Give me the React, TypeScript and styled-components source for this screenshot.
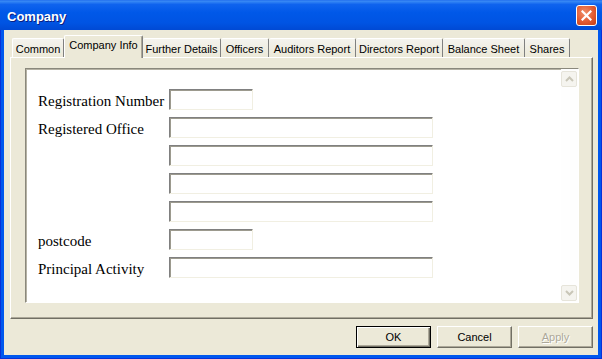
import { Fragment } from 'react';
import styled, { createGlobalStyle } from 'styled-components';

const GlobalStyle = createGlobalStyle`
  html, body {
    margin: 0;
    padding: 0;
    background: #ffffff;
  }
  body {
    font-family: 'Liberation Sans', Arial, sans-serif;
  }
  * {
    box-sizing: border-box;
  }
`;

const Window = styled.div`
  width: 602px;
  height: 359px;
  display: flex;
  flex-direction: column;
  background: #0055e5;
`;

const TitleBar = styled.div`
  height: 30px;
  flex: none;
  display: flex;
  align-items: center;
  justify-content: space-between;
  padding: 0 5px 0 7px;
  background: linear-gradient(
    to bottom,
    #3b8cf5 0%,
    #0f63ee 12%,
    #0058e8 40%,
    #0054e3 75%,
    #0049d4 100%
  );
  border-top: 1px solid #2a78f0;
`;

const Title = styled.span`
  color: #ffffff;
  font-family: 'Liberation Sans', Arial, sans-serif;
  font-weight: bold;
  font-size: 13px;
  text-shadow: 1px 1px 0 #0a1e80;
  padding-top: 1px;
`;

const CloseButton = styled.div`
  width: 21px;
  height: 21px;
  display: flex;
  align-items: center;
  justify-content: center;
  border: 1px solid #ffffff;
  border-radius: 3px;
  background: radial-gradient(circle at 40% 35%, #f0906a 0%, #e25a32 55%, #c63d14 100%);
`;

const Frame = styled.div`
  flex: 1;
  display: flex;
  padding: 0 3px 3px 3px;
  border: 1px solid #0831d9;
  border-top: none;
  background: #0058ee;
`;

const Client = styled.div`
  flex: 1;
  display: flex;
  flex-direction: column;
  background: #ece9d8;
  padding: 5px 5px 7px 6px;
`;

const TabStrip = styled.div`
  height: 22px;
  flex: none;
  display: flex;
  align-items: flex-end;
  padding-left: 2px;
`;

type TabProps = {
  $w: number;
  $active?: boolean;
};

const Tab = styled.div<TabProps>`
  width: ${(p) => p.$w}px;
  height: ${(p) => (p.$active ? 23 : 19)}px;
  margin-bottom: ${(p) => (p.$active ? -1 : 0)}px;
  position: relative;
  z-index: ${(p) => (p.$active ? 1 : 0)};
  display: flex;
  justify-content: center;
  align-items: flex-start;
  padding-top: ${(p) => (p.$active ? 3 : 4)}px;
  font-size: 11px;
  color: #000000;
  white-space: nowrap;
  background: ${(p) => (p.$active ? '#ece9d8' : 'linear-gradient(to bottom, #f4f3ee, #ece9d8)')};
  border-top: 1px solid #ffffff;
  border-left: ${(p) => (p.$active ? '1px solid #ffffff' : 'none')};
  border-right: 1px solid #808080;
  box-shadow: ${(p) => (p.$active ? 'inset -1px 0 0 #aca899' : 'none')};
  border-radius: 2px 2px 0 0;

  &:first-child {
    border-left: 1px solid #ffffff;
  }
`;

const Panel = styled.div`
  flex: 1;
  display: flex;
  border-top: 1px solid #ffffff;
  border-left: 1px solid #ffffff;
  border-right: 1px solid #716f64;
  border-bottom: 1px solid #716f64;
  box-shadow: inset -1px -1px 0 #aca899;
  padding: 10px 13px 15px 14px;
`;

const ScrollBox = styled.div`
  flex: 1;
  display: flex;
  background: #ffffff;
  border-top: 1px solid #8a887c;
  border-left: 1px solid #8a887c;
  border-right: 1px solid #ffffff;
  border-bottom: 1px solid #ffffff;
  box-shadow: inset 1px 1px 0 #b5b2a4;
`;

const Form = styled.div`
  flex: 1;
  display: grid;
  grid-template-columns: 131px 1fr;
  grid-auto-rows: 21px;
  row-gap: 7px;
  align-content: start;
  padding: 20px 0 0 12px;
`;

const Label = styled.div`
  grid-column: 1;
  font-family: 'Liberation Serif', 'Times New Roman', serif;
  font-size: 15px;
  color: #000000;
  line-height: 21px;
  white-space: nowrap;
  padding-top: 2px;
`;

const Field = styled.div<{ $w: number }>`
  grid-column: 2;
  width: ${(p) => p.$w}px;
  height: 21px;
  background: #ffffff;
  border-top: 1px solid #808080;
  border-left: 1px solid #808080;
  border-right: 1px solid #f1efe2;
  border-bottom: 1px solid #f1efe2;
  box-shadow: inset 1px 1px 0 #9c9a8e;
`;

const ScrollBar = styled.div`
  width: 17px;
  flex: none;
  display: flex;
  flex-direction: column;
  justify-content: space-between;
  padding: 2px 1px 1px 0;
  background: #fefefe;
`;

const ArrowButton = styled.div`
  width: 16px;
  height: 16px;
  display: flex;
  align-items: center;
  justify-content: center;
  background: #f5f4ef;
  border: 1px solid #e6e4da;
  border-radius: 2px;
`;

const ButtonRow = styled.div`
  flex: none;
  display: flex;
  justify-content: flex-end;
  gap: 6px;
  margin-top: 7px;
`;

type ButtonProps = {
  $default?: boolean;
  $disabled?: boolean;
};

const Button = styled.div<ButtonProps>`
  width: 75px;
  height: 22px;
  display: flex;
  align-items: center;
  justify-content: center;
  font-size: 11px;
  color: ${(p) => (p.$disabled ? '#aca899' : '#000000')};
  text-shadow: ${(p) => (p.$disabled ? '1px 1px 0 #ffffff' : 'none')};
  background: #ece9d8;
  border: 1px solid;
  border-color: ${(p) =>
    p.$default ? '#000000' : '#ffffff #716f64 #716f64 #ffffff'};
  box-shadow: ${(p) =>
    p.$default
      ? 'inset 1px 1px 0 #ffffff, inset -1px -1px 0 #716f64, inset -2px -2px 0 #aca899'
      : 'inset -1px -1px 0 #aca899'};
`;

const tabs = [
  { name: 'Common', w: 52 },
  { name: 'Company Info', w: 79, active: true },
  { name: 'Further Details', w: 78 },
  { name: 'Officers', w: 48 },
  { name: 'Auditors Report', w: 87 },
  { name: 'Directors Report', w: 87 },
  { name: 'Balance Sheet', w: 82 },
  { name: 'Shares', w: 45 },
];

const fields = [
  { label: 'Registration Number', w: 84 },
  { label: 'Registered Office', w: 264 },
  { label: '', w: 264 },
  { label: '', w: 264 },
  { label: '', w: 264 },
  { label: 'postcode', w: 84 },
  { label: 'Principal Activity', w: 264 },
];

function Chevron({ up }: { up?: boolean }) {
  return (
    <svg width="9" height="6" viewBox="0 0 9 6">
      <polyline
        points={up ? '1,5 4.5,1.5 8,5' : '1,1 4.5,4.5 8,1'}
        fill="none"
        stroke="#c9c6b8"
        strokeWidth="2"
      />
    </svg>
  );
}

export default function App() {
  return (
    <>
      <GlobalStyle />
      <Window>
        <TitleBar>
          <Title>Company</Title>
          <CloseButton>
            <svg width="11" height="11" viewBox="0 0 11 11">
              <path d="M1.5 1.5 L9.5 9.5 M9.5 1.5 L1.5 9.5" stroke="#ffffff" strokeWidth="2.2" strokeLinecap="square" />
            </svg>
          </CloseButton>
        </TitleBar>
        <Frame>
          <Client>
            <TabStrip>
              {tabs.map((t) => (
                <Tab key={t.name} $w={t.w} $active={t.active}>
                  {t.name}
                </Tab>
              ))}
            </TabStrip>
            <Panel>
              <ScrollBox>
                <Form>
                  {fields.map((f, i) => (
                    <Fragment key={i}>
                      {f.label && <Label>{f.label}</Label>}
                      <Field $w={f.w} />
                    </Fragment>
                  ))}
                </Form>
                <ScrollBar>
                  <ArrowButton>
                    <Chevron up />
                  </ArrowButton>
                  <ArrowButton>
                    <Chevron />
                  </ArrowButton>
                </ScrollBar>
              </ScrollBox>
            </Panel>
            <ButtonRow>
              <Button $default>OK</Button>
              <Button>Cancel</Button>
              <Button $disabled>
                <span>
                  <u>A</u>pply
                </span>
              </Button>
            </ButtonRow>
          </Client>
        </Frame>
      </Window>
    </>
  );
}
